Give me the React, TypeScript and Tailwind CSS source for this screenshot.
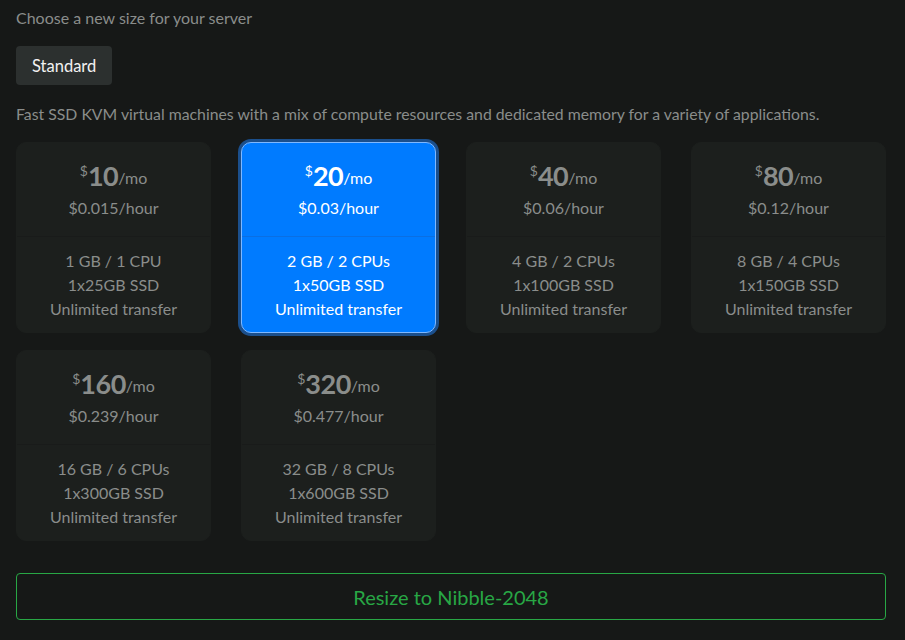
const plans = [
  { price: "10", hourly: "$0.015/hour", spec: "1 GB / 1 CPU", disk: "1x25GB SSD" },
  { price: "20", hourly: "$0.03/hour", spec: "2 GB / 2 CPUs", disk: "1x50GB SSD", selected: true },
  { price: "40", hourly: "$0.06/hour", spec: "4 GB / 2 CPUs", disk: "1x100GB SSD" },
  { price: "80", hourly: "$0.12/hour", spec: "8 GB / 4 CPUs", disk: "1x150GB SSD" },
  { price: "160", hourly: "$0.239/hour", spec: "16 GB / 6 CPUs", disk: "1x300GB SSD" },
  { price: "320", hourly: "$0.477/hour", spec: "32 GB / 8 CPUs", disk: "1x600GB SSD" },
];

export default function App() {
  return (
    <div
      className="min-h-screen bg-[#161817] px-4 pt-[6px] pb-5 text-[#8a8d8b]"
      style={{ fontFamily: "Lato, 'Open Sans', sans-serif" }}
    >
      <p className="text-base leading-6">Choose a new size for your server</p>

      <button className="mt-4 h-[39px] rounded bg-[#2c302f] px-[16px] pt-[2px] text-[16.5px] text-[#f2f2f2]">
        Standard
      </button>

      <p className="mt-[17px] text-[15.8px] leading-6">
        Fast SSD KVM virtual machines with a mix of compute resources and dedicated memory for a variety of
        applications.
      </p>

      <div className="mt-4 grid w-[870px] grid-cols-4 gap-x-[30px] gap-y-[17px]">
        {plans.map((p) => (
          <div
            key={p.price}
            className={
              p.selected
                ? "rounded-[10px] border border-[#7fb8ff] bg-[#007bff] text-white shadow-[0_0_0_3px_#1b4f8c]"
                : "rounded-[10px] border border-[#1c1f1d] bg-[#1c1f1d]"
            }
          >
            <div
              className={
                p.selected
                  ? "border-b border-[#0a6fe3] pt-[15px] pb-4 text-center"
                  : "border-b border-[#191b1a] pt-[15px] pb-4 text-center"
              }
            >
              <div className="mb-[2px] flex h-9 items-center justify-center">
                <span className="self-start pt-[3px] text-sm">$</span>
                <span className="text-[27px] font-bold leading-9 tracking-[-0.5px]">{p.price}</span>
                <span className="mt-[4px] text-base">/mo</span>
              </div>
              <p className="text-base leading-6">{p.hourly}</p>
            </div>
            <div className="pt-3 pb-[11px] text-center text-base leading-6">
              <p>{p.spec}</p>
              <p>{p.disk}</p>
              <p>Unlimited transfer</p>
            </div>
          </div>
        ))}
      </div>

      <button className="mt-8 h-[47px] w-[870px] rounded border border-[#28a745] text-xl text-[#28a745]">
        Resize to Nibble-2048
      </button>
    </div>
  );
}
